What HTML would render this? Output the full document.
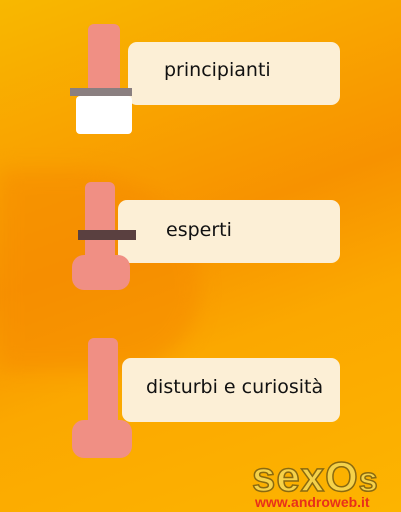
<!DOCTYPE html><html><head><style>
body{margin:0;width:401px;height:512px;overflow:hidden;position:relative;font-family:"DejaVu Sans","Liberation Sans",sans-serif;
background:linear-gradient(160deg,#f8b800 0%,#f9a300 25%,#f79200 45%,#fba800 65%,#fdb400 100%);}
.b{position:absolute;background:#fcefd6;border-radius:9px;font-size:19px;color:#111;}
.p{position:absolute;background:#f08f84;}
</style></head><body>
<div style="position:absolute;left:0;top:170px;width:200px;height:200px;background:#f68c00;border-radius:0 60% 40% 0;opacity:.6;filter:blur(10px)"></div>
<div class="b" style="left:128px;top:42px;width:212px;height:63px"><span style="position:absolute;left:36px;top:17px">principianti</span></div>
<div class="b" style="left:118px;top:200px;width:222px;height:63px"><span style="position:absolute;left:48px;top:19px">esperti</span></div>
<div class="b" style="left:122px;top:358px;width:218px;height:64px"><span style="position:absolute;left:24px;top:18px">disturbi e curiosità</span></div>
<div class="p" style="left:88px;top:24px;width:32px;height:70px;border-radius:6px 6px 0 0"></div>
<div style="position:absolute;left:70px;top:88px;width:62px;height:8px;background:#8a7f80"></div>
<div style="position:absolute;left:76px;top:96px;width:56px;height:38px;background:#fff;border-radius:4px"></div>
<div class="p" style="left:85px;top:182px;width:30px;height:80px;border-radius:6px 6px 0 0"></div>
<div class="p" style="left:72px;top:255px;width:58px;height:35px;border-radius:12px"></div>
<div style="position:absolute;left:78px;top:230px;width:58px;height:10px;background:#5a4040"></div>
<div class="p" style="left:88px;top:338px;width:30px;height:90px;border-radius:6px 6px 0 0"></div>
<div class="p" style="left:72px;top:420px;width:60px;height:38px;border-radius:12px"></div>
<div style="position:absolute;left:252px;top:453px;font:bold 42px 'Liberation Sans',sans-serif;color:#f5d24a;-webkit-text-stroke:1.5px #8a6a10;letter-spacing:1px">sexO<span style="font-size:34px">s</span></div>
<div style="position:absolute;left:255px;top:494px;font:bold 14px 'Liberation Sans',sans-serif;color:#e8301a">www.androweb.it</div>
</body></html>
